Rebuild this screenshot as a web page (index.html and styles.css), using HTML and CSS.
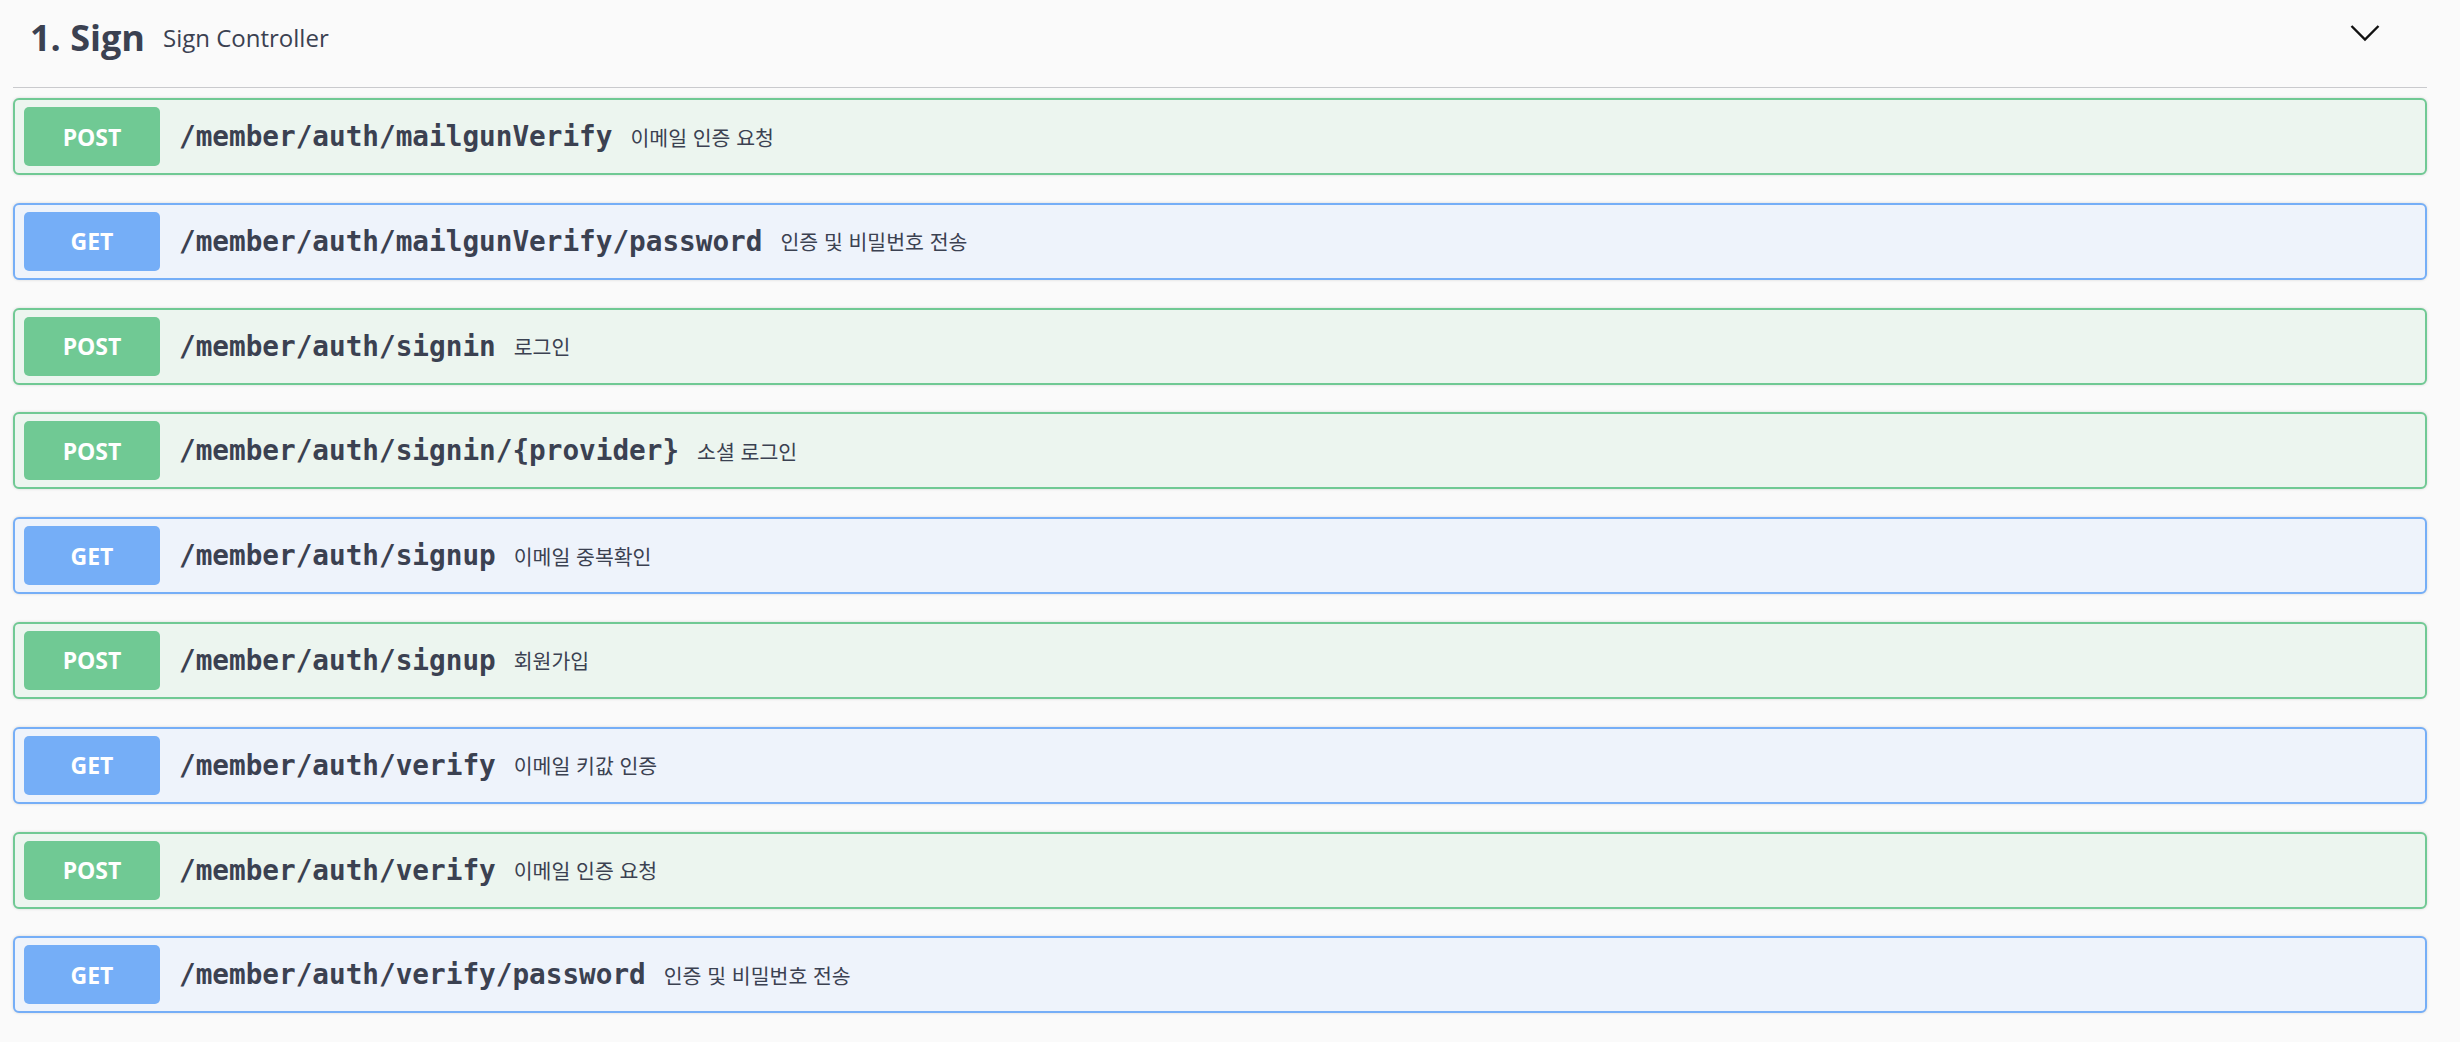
FILE: index.html
```html
<!DOCTYPE html>
<html lang="ko">
<head>
    <meta charset="UTF-8">
    <meta name="viewport" content="width=device-width, initial-scale=1.0" />
    <title>Swagger UI</title>
    <link rel="stylesheet" href="styles.css">
</head>
<body>
  <div class="container">
    <div class="tag">
      <h3 class="tag-title">1. Sign</h3>
      <span class="tag-desc">Sign Controller</span>
      <span class="toggle">
        <svg width="30" height="18" viewBox="0 0 30 18"><polyline points="1.5,2 15,15.5 28.5,2" fill="none" stroke="#111" stroke-width="2.4"/></svg>
      </span>
    </div>

    <div class="op post">
      <span class="method">POST</span>
      <span class="path">/member/auth/mailgunVerify</span>
      <span class="summary">이메일 인증 요청</span>
    </div>
    <div class="op get">
      <span class="method">GET</span>
      <span class="path">/member/auth/mailgunVerify/password</span>
      <span class="summary">인증 및 비밀번호 전송</span>
    </div>
    <div class="op post">
      <span class="method">POST</span>
      <span class="path">/member/auth/signin</span>
      <span class="summary">로그인</span>
    </div>
    <div class="op post">
      <span class="method">POST</span>
      <span class="path">/member/auth/signin/{provider}</span>
      <span class="summary">소셜 로그인</span>
    </div>
    <div class="op get">
      <span class="method">GET</span>
      <span class="path">/member/auth/signup</span>
      <span class="summary">이메일 중복확인</span>
    </div>
    <div class="op post">
      <span class="method">POST</span>
      <span class="path">/member/auth/signup</span>
      <span class="summary">회원가입</span>
    </div>
    <div class="op get">
      <span class="method">GET</span>
      <span class="path">/member/auth/verify</span>
      <span class="summary">이메일 키값 인증</span>
    </div>
    <div class="op post">
      <span class="method">POST</span>
      <span class="path">/member/auth/verify</span>
      <span class="summary">이메일 인증 요청</span>
    </div>
    <div class="op get">
      <span class="method">GET</span>
      <span class="path">/member/auth/verify/password</span>
      <span class="summary">인증 및 비밀번호 전송</span>
    </div>
  </div>
</body>
</html>
```

FILE: styles.css
```css
body {
  margin: 0;
  padding: 0;
  background-color: #fafafa;
  font-family: "Open Sans", "Noto Sans CJK KR", sans-serif;
  color: #3b4151;
}
.container {
  margin: 0 33px 0 13px;
}
.tag {
  display: flex;
  align-items: center;
  height: 74px;
  padding: 0 0 13px 17px;
  border-bottom: 1px solid #c9cacd;
  margin-bottom: 10px;
}
.tag-title {
  margin: 0;
  font-size: 36px;
  font-weight: 700;
  color: #3b4151;
}
.tag-desc {
  margin-left: 18px;
  font-size: 24px;
  font-weight: 400;
}
.toggle {
  margin-left: auto;
  margin-right: 47px;
  margin-bottom: 8px;
  display: flex;
}
.op {
  display: flex;
  align-items: center;
  height: 59px;
  padding: 7px 9px;
  margin-bottom: 27.8px;
  border: 2px solid;
  border-radius: 6px;
  box-shadow: 0 0 3px rgba(0, 0, 0, 0.15);
}
.op.post {
  background-color: #ecf5ef;
  border-color: #70c994;
}
.op.get {
  background-color: #eef3fb;
  border-color: #75aef7;
}
.method {
  width: 136px;
  height: 59px;
  display: flex;
  align-items: center;
  justify-content: center;
  border-radius: 5px;
  color: #fff;
  font-size: 23px;
  font-weight: 700;
}
.post .method {
  background-color: #70c994;
}
.get .method {
  background-color: #75aef7;
}
.path {
  padding: 0 18px 0 19px;
  font-family: "DejaVu Sans Mono", monospace;
  font-size: 27.7px;
  font-weight: 700;
  color: #3b4151;
}
.summary {
  font-family: "Noto Sans CJK KR", sans-serif;
  font-size: 20.5px;
  color: #3b4151;
}
```
